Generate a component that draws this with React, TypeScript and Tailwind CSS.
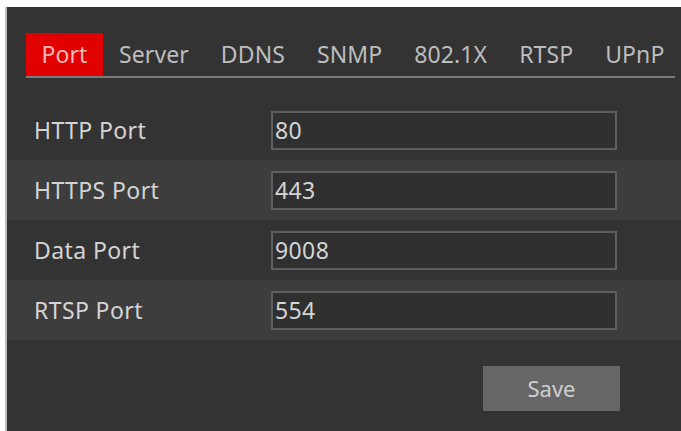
import React from "react";

const tabs = ["Port", "Server", "DDNS", "SNMP", "802.1X", "RTSP", "UPnP"];
const rows = [
  { label: "HTTP Port", value: "80" },
  { label: "HTTPS Port", value: "443" },
  { label: "Data Port", value: "9008" },
  { label: "RTSP Port", value: "554" },
];

export default function App() {
  return (
    <div
      className="w-[681px] h-[431px] bg-white pt-[7px] pl-[5px] overflow-hidden"
      style={{ fontFamily: '"Noto Sans", "Open Sans", sans-serif' }}
    >
      <div className="h-full border-l-2 border-[#bdbdbd] bg-[#333333] flex flex-col">
        <div className="pt-[26px] pl-[19px] pr-[6px]">
          <div className="flex items-stretch h-[45px] border-b-2 border-[#7a7a7a] text-[23px] tracking-[0.1px] text-[#bdbdbd] overflow-hidden">
            {tabs.map((t, i) => (
              <div
                key={t}
                className={
                  i === 0
                    ? "shrink-0 bg-[#e00000] text-[#f5b8b8] w-[77px] flex items-center justify-center"
                    : "shrink-0 flex items-center justify-center px-[16px]"
                }
              >
                {t}
              </div>
            ))}
          </div>
        </div>
        <div className="mt-[22px] flex flex-col">
          {rows.map((r, i) => (
            <div
              key={r.label}
              className={`h-[60px] flex items-center ${i % 2 === 1 ? "bg-[#3d3d3d]" : ""}`}
            >
              <div className="w-[264px] pl-[27px] text-[23px] tracking-[0.4px] text-[#d4d4d4]">{r.label}</div>
              <div className="w-[346px] h-[39px] border-2 border-[#5f5f5f] bg-[#303030] flex items-center pl-[2px] text-[23px] tracking-[0.4px] text-[#d4d4d4]">
                {r.value}
              </div>
            </div>
          ))}
        </div>
        <div className="flex pl-[476px] pt-[26px]">
          <div className="w-[137px] h-[45px] bg-[#666666] flex items-center justify-center text-[22px] text-[#cfcfcf]">
            Save
          </div>
        </div>
      </div>
    </div>
  );
}
